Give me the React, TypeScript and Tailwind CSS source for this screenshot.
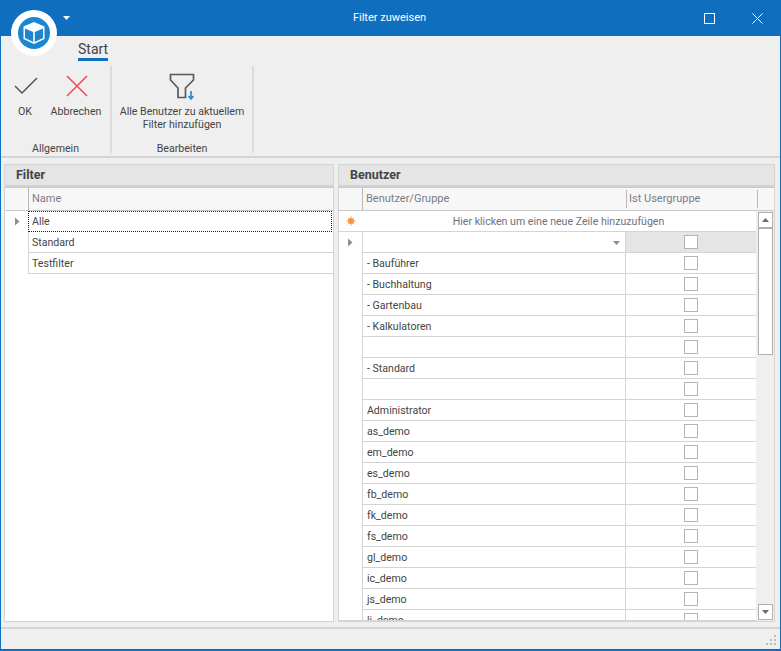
import React from "react";

const font = { fontFamily: 'Roboto, Tahoma, sans-serif' };

const users = ["", "- Bauführer", "- Buchhaltung", "- Gartenbau", "- Kalkulatoren", "", "- Standard", "", "Administrator", "as_demo", "em_demo", "es_demo", "fb_demo", "fk_demo", "fs_demo", "gl_demo", "ic_demo", "js_demo", "li_demo"];

function Arrow() {
  return (
    <svg width="6" height="9" viewBox="0 0 6 9" className="block">
      <path d="M1 0.5 L5.5 4.5 L1 8.5 Z" fill="#8c8c8c" />
    </svg>
  );
}

function Star() {
  return (
    <svg width="10" height="10" viewBox="0 0 10 10" className="block">
      <g stroke="#f9b47a" strokeWidth="1">
        <path d="M5 0 V10 M0 5 H10 M1.5 1.5 L8.5 8.5 M8.5 1.5 L1.5 8.5" />
      </g>
      <circle cx="5" cy="5" r="3" fill="#f7943f" />
    </svg>
  );
}

function PanelTitle({ children }: { children: React.ReactNode }) {
  return (
    <div className="h-[22px] shrink-0 bg-[#e5e5e5] border-b-2 border-[#d2d2d2] pl-[11px] text-[12.5px] leading-[20px] font-bold text-[#444]">
      {children}
    </div>
  );
}

export default function App() {
  return (
    <div style={font} className="w-[781px] h-[651px] overflow-hidden flex flex-col bg-[#efefef] border-x border-b-2 border-[#106ebe] text-[10.6px] text-[#444] relative">
      {/* Title bar */}
      <div className="h-9 shrink-0 bg-[#106ebe] flex items-center relative">
        <div className="flex-1 text-center text-white text-[11px] pr-[2px]">Filter zuweisen</div>
        <div className="absolute left-[703px] top-[13px] w-[11px] h-[11px] border border-white" />
        <svg className="absolute left-[751px] top-[13px]" width="11" height="11" viewBox="0 0 11 11">
          <path d="M0.5 0.5 L10.5 10.5 M10.5 0.5 L0.5 10.5" stroke="#fff" strokeWidth="1" />
        </svg>
        <svg className="absolute left-[62px] top-[16px]" width="7" height="4" viewBox="0 0 7 4">
          <path d="M0 0 H7 L3.5 4 Z" fill="#fff" />
        </svg>
      </div>

      {/* App logo */}
      <div className="absolute left-[10px] top-[10px] w-[46px] h-[46px] rounded-full bg-white flex items-center justify-center">
        <svg width="32" height="32" viewBox="0 0 32 32">
          <circle cx="16" cy="16" r="16" fill="#1b87d0" />
          <path d="M16 5 L26.5 9.5 V22 L16 27 L5.5 22 V9.5 Z" fill="#fff" />
          <path d="M7 11.5 L15.2 15 V25 L7 21 Z M25 11.5 L16.8 15 V25 L25 21 Z" fill="#1b87d0" />
        </svg>
      </div>

      {/* Ribbon */}
      <div className="h-[122px] shrink-0 border-b-2 border-[#d4d4d4] flex flex-col">
        <div className="h-[30px] shrink-0 pl-[77px] pt-[5px]">
          <div className="w-[30px] h-[20px] border-b-[3px] border-[#106ebe] text-[14px] leading-[17px] text-center">Start</div>
        </div>
        <div className="h-[87px] flex">
          <div className="w-[111px] border-r-2 border-[#dcdcdc] flex flex-col">
            <div className="flex shrink-0 pl-[11px] gap-[12px] h-[76px]">
              <div className="flex flex-col items-center w-[26px]">
                <svg width="26" height="26" viewBox="0 0 26 26" className="mt-[6px]">
                  <path d="M3 14 L10 21 L25 6" fill="none" stroke="#555" strokeWidth="1.5" />
                </svg>
                <div className="mt-[7px] leading-[14px]">OK</div>
              </div>
              <div className="flex flex-col items-center w-[54px] -ml-[1px]">
                <svg width="24" height="24" viewBox="0 0 24 24" className="mt-[8px] ml-[2px]">
                  <path d="M2 2 L22 22 M22 2 L2 22" fill="none" stroke="#ee4b4b" strokeWidth="1.5" />
                </svg>
                <div className="mt-[7px] leading-[14px]">Abbrechen</div>
              </div>
            </div>
            <div className="h-[11px] shrink-0 text-center leading-[14px]">Allgemein</div>
          </div>
          <div className="w-[142px] border-r-2 border-[#dcdcdc] flex flex-col">
            <div className="h-[76px] shrink-0 flex flex-col items-center">
              <svg width="28" height="28" viewBox="0 0 28 28" className="mt-[7px] ml-[2px]">
                <path d="M1.5 1.5 H24.5 V7 L16.5 15 V24.5 H9 V15 L1.5 7 Z" fill="none" stroke="#595959" strokeWidth="1.7" />
                <path d="M22 18 V25.5 M19.5 23 L22 26 L24.5 23" fill="none" stroke="#2a8ad4" strokeWidth="1.7" />
              </svg>
              <div className="mt-[4px] leading-[13px] text-center whitespace-nowrap">Alle Benutzer zu aktuellem<br />Filter hinzufügen</div>
            </div>
            <div className="h-[11px] shrink-0 text-center leading-[14px]">Bearbeiten</div>
          </div>
        </div>
      </div>

      {/* Panels */}
      <div className="h-[471px] shrink-0 border-b-2 border-[#d4d4d4] flex gap-[4px] pl-[3px] pt-[6px] pb-[5px]">
        {/* Filter */}
        <div className="w-[330px] border border-[#d4d4d4] bg-white flex flex-col">
          <PanelTitle>Filter</PanelTitle>
          <div className="h-[24px] shrink-0 flex bg-[#f7f7f7] border-b border-[#c8c8c8] border-t border-t-[#c8c8c8]">
            <div className="w-[24px] border-r border-[#b8b8b8]" />
            <div className="flex-1 pl-[3px] text-[11px] leading-[22px] text-[#7b7b86]">Name</div>
          </div>
          <div className="flex h-[21px]">
            <div className="w-[24px] flex items-center justify-center"><Arrow /></div>
            <div className="flex-1 pl-[3px] leading-[19px] border border-dotted border-[#222] ml-[-1px] mr-[1px]">Alle</div>
          </div>
          <div className="flex h-[21px]">
            <div className="w-[23px]" />
            <div className="flex-1 pl-[3px] pt-[1px] leading-[19px] border-b border-l border-[#d4d4d4]">Standard</div>
          </div>
          <div className="flex h-[21px]">
            <div className="w-[23px]" />
            <div className="flex-1 pl-[3px] pt-[1px] leading-[19px] border-b border-l border-[#d4d4d4]">Testfilter</div>
          </div>
        </div>

        {/* Benutzer */}
        <div className="w-[437px] border border-[#d4d4d4] bg-white flex flex-col">
          <PanelTitle>Benutzer</PanelTitle>
          <div className="h-[24px] shrink-0 flex bg-[#f7f7f7] border-b border-t border-[#c8c8c8] text-[11px]">
            <div className="w-[24px] border-r border-[#b8b8b8]" />
            <div className="w-[264px] pl-[3px] text-[#7b7b86] border-r border-[#b8b8b8] my-[2px] leading-[18px]">Benutzer/Gruppe</div>
            <div className="w-[131px] pl-[2px] text-[#7b7b86] border-r border-[#b8b8b8] my-[2px] leading-[18px]">Ist Usergruppe</div>
          </div>
          <div className="flex-1 flex min-h-0">
            <div className="w-[418px] flex flex-col overflow-hidden border-b border-[#d4d4d4]">
              <div className="flex h-[21px] shrink-0 border-b border-[#d4d4d4]">
                <div className="w-[24px] flex items-center justify-center"><Star /></div>
                <div className="flex-1 text-center pt-[1px] leading-[19px] text-[#6f6f7b] pr-[2px]">Hier klicken um eine neue Zeile hinzuzufügen</div>
              </div>
              {users.map((u, i) => (
                <div key={i} className="flex h-[21px] shrink-0">
                  <div className="w-[23px] flex items-center justify-center">{i === 0 && <Arrow />}</div>
                  <div className="w-[265px] pl-[4px] pt-[1px] leading-[19px] border-l border-b border-r border-[#d4d4d4] relative">
                    {u}
                    {i === 0 && (
                      <svg className="absolute right-[5px] top-[9px]" width="7" height="4" viewBox="0 0 7 4">
                        <path d="M0 0 H7 L3.5 4 Z" fill="#8c8c8c" />
                      </svg>
                    )}
                  </div>
                  <div className={`w-[130px] border-b border-[#d4d4d4] flex items-center justify-center ${i === 0 ? "bg-[#e5e5e5]" : ""}`}>
                    <div className="w-[14px] h-[14px] border border-[#b4b4b4] bg-white" />
                  </div>
                </div>
              ))}
            </div>
            {/* Scrollbar */}
            <div className="w-[18px] bg-[#efefef] flex flex-col pl-[1px] pb-[1px] border-l border-[#efefef]">
              <div className="w-[15px] h-[16px] mt-[1px] border border-[#b0b0b0] bg-white flex items-center justify-center">
                <svg width="7" height="4" viewBox="0 0 7 4"><path d="M0 4 H7 L3.5 0 Z" fill="#6a6a6a" /></svg>
              </div>
              <div className="w-[15px] h-[127px] border border-[#b0b0b0] bg-white" />
              <div className="flex-1" />
              <div className="w-[15px] h-[16px] border border-[#b0b0b0] bg-white flex items-center justify-center">
                <svg width="7" height="4" viewBox="0 0 7 4"><path d="M0 0 H7 L3.5 4 Z" fill="#6a6a6a" /></svg>
              </div>
            </div>
          </div>
        </div>
      </div>

      {/* Status bar */}
      <div className="flex-1 relative">
        <svg className="absolute right-[3px] bottom-[3px]" width="11" height="11" viewBox="0 0 11 11">
          <path d="M8 0h2v2H8z M4 4h2v2H4z M8 4h2v2H8z M0 8h2v2H0z M4 8h2v2H4z M8 8h2v2H8z" fill="#bdbdbd" />
        </svg>
      </div>
    </div>
  );
}
